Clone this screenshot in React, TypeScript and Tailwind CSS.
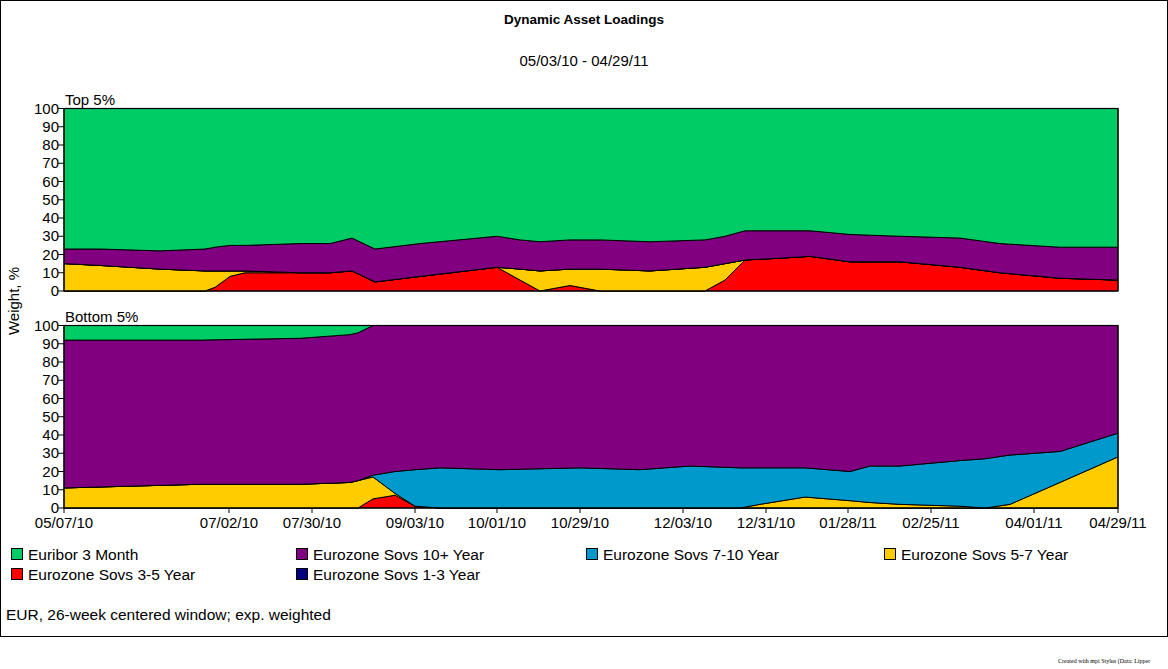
const COLORS = ['#ff0000', '#ffcc00', '#0099cc', '#800080', '#00cc66'];

// cumulative tops: red, yellow, blue, purple (green fills to 100)
const TOP: number[][] = [
  [64, 0, 15, 15, 23], [100, 0, 14, 14, 23], [160, 0, 12, 12, 22], [205, 0, 11, 11, 23],
  [215, 2, 11, 11, 24], [230, 8, 11, 11, 25], [245, 10, 11, 11, 25], [300, 10, 10, 10, 26],
  [330, 10, 10, 10, 26], [352, 11, 11, 11, 29], [375, 5, 5, 5, 23], [420, 8, 8, 8, 26],
  [497, 13, 13, 13, 30], [520, 6, 12, 12, 28], [540, 0, 11, 11, 27], [570, 3, 12, 12, 28],
  [600, 0, 12, 12, 28], [650, 0, 11, 11, 27], [705, 0, 13, 13, 28], [725, 6, 15, 15, 30],
  [745, 17, 17, 17, 33], [780, 18, 18, 18, 33], [810, 19, 19, 19, 33], [850, 16, 16, 16, 31],
  [900, 16, 16, 16, 30], [960, 13, 13, 13, 29], [1000, 10, 10, 10, 26], [1060, 7, 7, 7, 24],
  [1118, 6, 6, 6, 24],
];

const BOTTOM: number[][] = [
  [64, 0, 11, 11, 92], [200, 0, 13, 13, 92], [300, 0, 13, 13, 93], [350, 0, 14, 14, 95],
  [358, 0, 15, 15, 96], [373, 5, 17, 18, 100], [395, 7, 8, 20, 100], [415, 1, 1, 21, 100],
  [440, 0, 0, 22, 100], [500, 0, 0, 21, 100], [580, 0, 0, 22, 100], [640, 0, 0, 21, 100],
  [690, 0, 0, 23, 100], [740, 0, 0, 22, 100], [760, 0, 2, 22, 100], [805, 0, 6, 22, 100],
  [850, 0, 4, 20, 100], [870, 0, 3, 23, 100], [900, 0, 2, 23, 100], [960, 0, 1, 26, 100],
  [985, 0, 0, 27, 100], [1010, 0, 2, 29, 100], [1060, 0, 14, 31, 100], [1118, 0, 28, 41, 100],
];

const X_TICKS: [number, string][] = [
  [64, '05/07/10'], [229, '07/02/10'], [312, '07/30/10'], [415, '09/03/10'], [497, '10/01/10'],
  [580, '10/29/10'], [683, '12/03/10'], [766, '12/31/10'], [848, '01/28/11'], [931, '02/25/11'],
  [1034, '04/01/11'], [1118, '04/29/11'],
];

function Plot({ data, base, label }: { data: number[][]; base: number; label: string }) {
  const h = 182.5;
  const y = (v: number) => base - (v / 100) * h;
  const level = (row: number[], i: number) => (i === 0 ? 0 : i === 5 ? 100 : row[i]);
  const layers = [1, 2, 3, 4, 5].map((i) => {
    const up = data.map((r) => `${r[0]},${y(level(r, i))}`);
    const lo = [...data].reverse().map((r) => `${r[0]},${y(level(r, i - 1))}`);
    return [...up, ...lo].join(' ');
  });
  return (
    <g>
      <text x={65} y={base - h - 4} fontSize={15}>{label}</text>
      {layers.map((p, i) => (
        <polygon key={i} points={p} fill={COLORS[i]} stroke="#000" strokeWidth={1} />
      ))}
      <rect x={64} y={base - h} width={1054} height={h} fill="none" stroke="#000" strokeWidth={1.2} />
      {Array.from({ length: 11 }, (_, k) => (
        <g key={k}>
          <line x1={58} x2={64} y1={y(k * 10)} y2={y(k * 10)} stroke="#000" />
          <text x={59} y={y(k * 10) + 5} fontSize={15} textAnchor="end">{k * 10}</text>
        </g>
      ))}
    </g>
  );
}

export default function App() {
  return (
    <div className="relative h-[669px] w-[1168px] bg-white text-black" style={{ fontFamily: '"Liberation Sans", Arial, sans-serif' }}>
      <div className="flex h-[637px] w-[1168px] flex-col border-[1.5px] border-black">
        <div className="pt-[9px] text-center text-[13.5px] font-bold">Dynamic Asset Loadings</div>
        <div className="pt-[20px] text-center text-[15px]">05/03/10 - 04/29/11</div>
        <svg width={1165} height={446} viewBox="1 88 1165 446" className="mt-[16px] block" fontFamily='"Liberation Sans", Arial, sans-serif'>
          <Plot data={TOP} base={290} label="Top 5%" />
          <Plot data={BOTTOM} base={507} label="Bottom 5%" />
          {X_TICKS.map(([x, t]) => (
            <g key={t}>
              <line x1={x} x2={x} y1={507} y2={512} stroke="#000" />
              <text x={x} y={527} fontSize={15} textAnchor="middle">{t}</text>
            </g>
          ))}
          <text x={0} y={0} fontSize={15} textAnchor="middle" transform="translate(19 300) rotate(-90)">Weight, %</text>
        </svg>
        <div className="grid grid-cols-[285px_290px_298px_1fr] gap-y-[1px] pl-[10px] pt-[10px] text-[15.5px] leading-[19px]">
          {[
            ['#00cc66', 'Euribor 3 Month'],
            ['#800080', 'Eurozone Sovs 10+ Year'],
            ['#0099cc', 'Eurozone Sovs 7-10 Year'],
            ['#ffcc00', 'Eurozone Sovs 5-7 Year'],
            ['#ff0000', 'Eurozone Sovs 3-5 Year'],
            ['#000080', 'Eurozone Sovs 1-3 Year'],
          ].map(([c, t]) => (
            <div key={t} className="flex items-center gap-[5px]">
              <span className="h-[12px] w-[12px] border border-black" style={{ backgroundColor: c }} />
              <span>{t}</span>
            </div>
          ))}
        </div>
        <div className="pl-[5px] pt-[19px] text-[15.5px]">EUR, 26-week centered window; exp. weighted</div>
      </div>
      <div className="absolute left-[1058px] top-[657px] text-[6px]" style={{ fontFamily: '"Liberation Serif", serif' }}>
        Created with mpi Stylus (Data: Lipper
      </div>
    </div>
  );
}
